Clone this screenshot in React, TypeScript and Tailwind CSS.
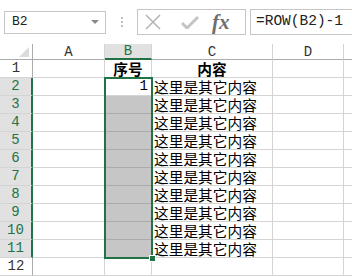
import React from 'react'

const mono = "font-['Liberation_Mono',monospace]"
const cjk = "font-['Noto_Sans_CJK_SC',sans-serif]"

const rows = [1, 2, 3, 4, 5, 6, 7, 8, 9, 10, 11, 12]

function TopBar() {
  return (
    <div className="flex h-[44px] items-center pl-[4px] bg-white">
      <div className="flex h-[23px] w-[102px] items-center justify-between border border-[#c6c6c6] pl-[7px] pr-[6px]">
        <span className={`${mono} text-[13px] text-[#222]`}>B2</span>
        <svg width="8" height="5" viewBox="0 0 8 5">
          <polygon points="0,0 8,0 4,4" fill="#8a8a8a" />
        </svg>
      </div>
      <div className="flex w-[31px] flex-col items-center gap-[2px]">
        <span className="h-[2px] w-[2px] bg-[#c0c0c0]" />
        <span className="h-[2px] w-[2px] bg-[#c0c0c0]" />
        <span className="h-[2px] w-[2px] bg-[#c0c0c0]" />
      </div>
      <div className="flex h-[26px] w-[109px] items-center border border-[#c6c6c6]">
        <svg className="ml-[7px]" width="16" height="16" viewBox="0 0 16 16">
          <path d="M1 1 L15 15 M15 1 L1 15" stroke="#b4b4b4" strokeWidth="1.5" fill="none" />
        </svg>
        <svg className="ml-[20px]" width="18" height="14" viewBox="0 0 18 14">
          <path d="M1 8 L6 13 L17 2" stroke="#c4c4c4" strokeWidth="3" fill="none" />
        </svg>
        <span className="ml-[13px] font-['Liberation_Serif',serif] text-[21px] font-bold italic leading-none text-[#6e6e6e]">fx</span>
      </div>
      <div className="ml-[4px] flex h-[26px] flex-1 items-center border border-r-0 border-[#c6c6c6] pl-[5px]">
        <span className={`${mono} text-[14.5px] text-[#222]`}>=ROW(B2)-1</span>
      </div>
    </div>
  )
}

function ColHeader({ label, w, active }: { label: string; w: string; active?: boolean }) {
  return (
    <div
      className={`${w} flex shrink-0 items-center justify-center border-r ${mono} text-[14px] leading-[14px] ${
        active
          ? 'border-b-2 border-r-[#d4d4d4] border-b-[#217346] bg-[#e1e1e1] text-[#217346]'
          : 'border-b border-r-[#d4d4d4] border-b-[#ababab] text-[#333]'
      }`}
    >
      {label}
    </div>
  )
}

function Row({ n }: { n: number }) {
  const sel = n >= 2 && n <= 11
  return (
    <div className="flex h-[18px]">
      <div
        className={`flex w-[33px] shrink-0 items-center justify-center border-b border-b-[#d4d4d4] ${mono} text-[14px] leading-[17px] ${
          sel ? 'border-r-2 border-r-[#217346] bg-[#e1e1e1] text-[#217346]' : 'border-r border-r-[#ababab] text-[#333]'
        }`}
      >
        {n}
      </div>
      <div className="w-[72px] shrink-0 border-b border-r border-[#d4d4d4]" />
      <div
        className={`flex w-[47px] shrink-0 items-center border-b border-r ${
          n >= 3 && n <= 11 ? 'border-[#ababab] bg-[#c6c6c6]' : 'border-[#d4d4d4]'
        } ${n === 1 ? 'justify-center' : 'justify-end pr-[3px]'}`}
      >
        {n === 1 && <span className={`${cjk} text-[14.7px] font-bold leading-[17px]`}>序号</span>}
        {n === 2 && <span className={`${mono} text-[14px] leading-[17px]`}>1</span>}
      </div>
      <div
        className={`flex w-[121px] shrink-0 items-center border-b border-r border-[#d4d4d4] ${
          n === 1 ? 'justify-center' : 'pl-[2px]'
        }`}
      >
        {n === 1 && <span className={`${cjk} text-[14.7px] font-bold leading-[17px]`}>内容</span>}
        {n >= 2 && n <= 11 && (
          <span className={`${cjk} whitespace-nowrap text-[14.7px] leading-[17px]`}>这里是其它内容</span>
        )}
      </div>
      <div className="w-[71px] shrink-0 border-b border-r border-[#d4d4d4]" />
      <div className="flex-1 border-b border-[#d4d4d4]" />
    </div>
  )
}

export default function App() {
  return (
    <div className="h-[276px] w-[352px] overflow-hidden bg-white text-black">
      <TopBar />
      <div className="relative">
        <div className="flex h-[16px]">
          <div className="flex w-[33px] shrink-0 items-end justify-end border-b border-r border-[#ababab] pb-[2px] pr-[3px]">
            <svg width="10" height="10" viewBox="0 0 10 10">
              <polygon points="10,0 10,10 0,10" fill="#dcdcdc" />
            </svg>
          </div>
          <ColHeader label="A" w="w-[72px]" />
          <ColHeader label="B" w="w-[47px]" active />
          <ColHeader label="C" w="w-[121px]" />
          <ColHeader label="D" w="w-[71px]" />
          <div className="flex-1 border-b border-[#ababab]" />
        </div>
        {rows.map((n) => (
          <Row key={n} n={n} />
        ))}
        <div className="pointer-events-none absolute left-[104px] top-[33px] h-[182px] w-[49px] border-2 border-[#217346]" />
        <div className="absolute left-[149px] top-[211px] h-[7px] w-[7px] border border-white bg-[#217346]" />
      </div>
    </div>
  )
}
